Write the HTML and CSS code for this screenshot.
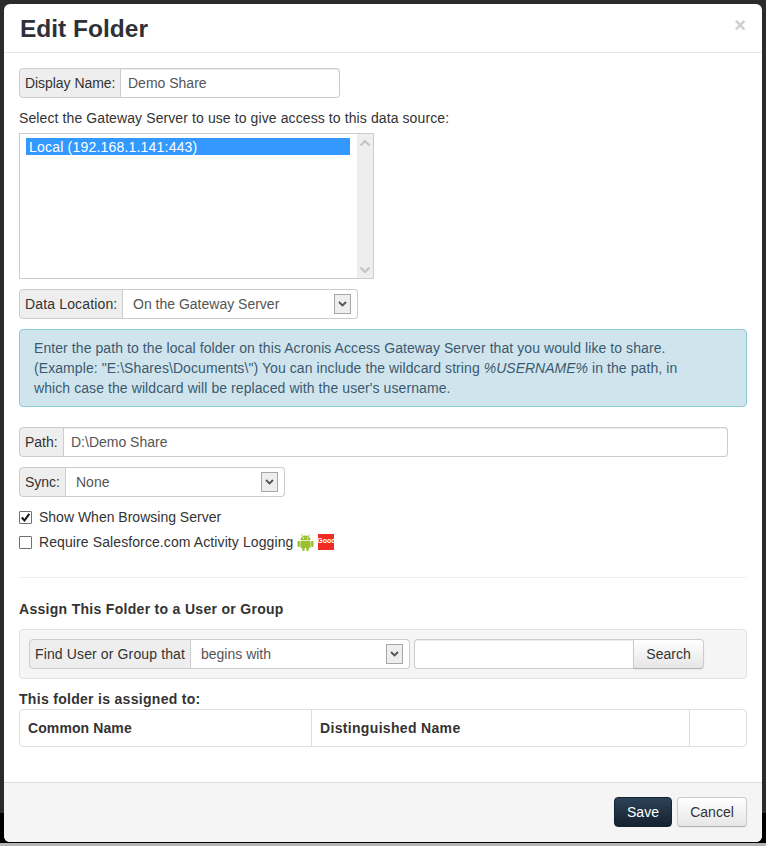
FILE: index.html
```html
<!DOCTYPE html>
<html lang="en">
<head>
<meta charset="utf-8">
<title>Edit Folder</title>
<link rel="stylesheet" href="styles.css">
</head>
<body>
<div class="backdrop">
  <div class="backdrop-strip"></div>
</div>
<div class="modal">
  <header class="modal-header">
    <h3 class="modal-title">Edit Folder</h3>
    <span class="close">×</span>
  </header>
  <div class="modal-body">
    <div class="group w-display">
      <span class="addon">Display Name:</span>
      <input class="field" type="text" value="Demo Share">
    </div>
    <p class="lead">Select the Gateway Server to use to give access to this data source:</p>
    <div class="listbox">
      <div class="list-items"><div class="option">Local (192.168.1.141:443)</div></div>
      <div class="scrollbar">
        <svg class="sb-arrow" width="12" height="8" viewBox="0 0 12 8"><path d="M1.5 6.5 6 2l4.500 4.500" fill="none" stroke="#c4c4c4" stroke-width="2.200"/></svg>
        <svg class="sb-arrow" width="12" height="8" viewBox="0 0 12 8"><path d="M1.500 1.500 6 6l4.500-4.500" fill="none" stroke="#c4c4c4" stroke-width="2.200"/></svg>
      </div>
    </div>
    <div class="group w-location">
      <span class="addon">Data Location:</span>
      <div class="select">
        <span>On the Gateway Server</span>
        <span class="select-arrow"><svg width="9" height="6" viewBox="0 0 9 6"><path d="M1 1l3.500 3.500L8 1" fill="none" stroke="#555" stroke-width="1.800"/></svg></span>
      </div>
    </div>
    <div class="alert">Enter the path to the local folder on this Acronis Access Gateway Server that you would like to share. (Example: "E:\Shares\Documents\") You can include the wildcard string <em class="wild">%USERNAME%</em> in the path, in which case the wildcard will be replaced with the user's username.</div>
    <div class="group w-path">
      <span class="addon">Path:</span>
      <input class="field field-tight" type="text" value="D:\Demo Share">
    </div>
    <div class="group w-sync">
      <span class="addon">Sync:</span>
      <div class="select">
        <span>None</span>
        <span class="select-arrow"><svg width="9" height="6" viewBox="0 0 9 6"><path d="M1 1l3.500 3.500L8 1" fill="none" stroke="#555" stroke-width="1.800"/></svg></span>
      </div>
    </div>
    <div class="check-row first">
      <span class="check"><svg width="11" height="11" viewBox="0 0 11 11"><path d="M1.800 5.500l2.700 3L9.300 1.800" fill="none" stroke="#111" stroke-width="2"/></svg></span>
      <span>Show When Browsing Server</span>
    </div>
    <div class="check-row second">
      <span class="check"></span>
      <span class="salesforce">Require Salesforce.com Activity Logging</span>
      <svg class="android" width="17" height="17" viewBox="0 0 17 17">
        <path d="M3.400 6.300a5.100 4.900 0 0 1 10.200 0z" fill="#9cc031"/>
        <path d="M5.500 2 4.600.4M11.500 2l.9-1.600" stroke="#9cc031" stroke-width=".9"/>
        <rect x="3.400" y="6.900" width="10.200" height="7.200" rx="1" fill="#9cc031"/>
        <rect x=".5" y="6.700" width="2.400" height="6.200" rx="1.200" fill="#9cc031"/>
        <rect x="14.100" y="6.700" width="2.400" height="6.200" rx="1.200" fill="#9cc031"/>
        <rect x="5.200" y="13" width="2.500" height="4" rx="1.200" fill="#9cc031"/>
        <rect x="9.300" y="13" width="2.500" height="4" rx="1.200" fill="#9cc031"/>
        <circle cx="6.400" cy="4" r=".7" fill="#fff"/>
        <circle cx="10.600" cy="4" r=".7" fill="#fff"/>
      </svg>
      <span class="good"><span class="good-text">Good</span></span>
    </div>
    <hr class="rule">
    <h4 class="section-title">Assign This Folder to a User or Group</h4>
    <div class="well">
      <div class="group w-find">
        <span class="addon">Find User or Group that</span>
        <div class="select select-find">
          <span>begins with</span>
          <span class="select-arrow"><svg width="9" height="6" viewBox="0 0 9 6"><path d="M1 1l3.500 3.500L8 1" fill="none" stroke="#555" stroke-width="1.800"/></svg></span>
        </div>
      </div>
      <div class="group w-search">
        <input class="field" type="text" value="">
        <button class="btn btn-search" type="button">Search</button>
      </div>
    </div>
    <div class="assigned-label">This folder is assigned to:</div>
    <div class="table">
      <div class="cell cell-common">Common Name</div>
      <div class="cell cell-dn">Distinguished Name</div>
      <div class="cell cell-blank"></div>
    </div>
  </div>
  <footer class="modal-footer">
    <button class="btn btn-save" type="button">Save</button>
    <button class="btn btn-cancel" type="button">Cancel</button>
  </footer>
</div>
</body>
</html>
```
FILE: styles.css
```css
* { box-sizing: border-box; }
html, body { margin: 0; height: 100%; }
body {
  width: 766px;
  height: 846px;
  overflow: hidden;
  background: #2b2b2b;
  font-family: "Liberation Sans", Arial, sans-serif;
  font-size: 14px;
  line-height: 20px;
  color: #333;
}
.backdrop { position: absolute; inset: 0; display: flex; flex-direction: column; justify-content: flex-end; }
.backdrop-strip { height: 33px; background: #000; border-bottom: 3px solid #b4b4b4; }
.modal {
  position: absolute;
  left: 4px;
  top: 4px;
  width: 758px;
  height: 838px;
  display: flex;
  flex-direction: column;
  background: #fff;
  border-radius: 6px;
}
.modal-header {
  height: 49px;
  flex: none;
  padding: 10px 16px 0 16px;
  border-bottom: 1px solid #e8e8e8;
  display: flex;
  justify-content: space-between;
}
.modal-title { margin: 0; font-size: 24.5px; line-height: 30px; font-weight: bold; color: #2e3138; }
.close { margin-top: -1px; font-size: 20px; line-height: 24px; font-weight: bold; color: #cfcfcf; }
.modal-body { flex: 1; padding: 15px 15px 0; }
.group { display: flex; height: 30px; }
.addon {
  flex: none;
  padding: 0 5px;
  line-height: 28px;
  background: #eee;
  border: 1px solid #ccc;
  border-radius: 4px 0 0 4px;
  white-space: nowrap;
}
.field {
  flex: 1;
  min-width: 0;
  height: 30px;
  padding: 0 7px;
  margin: 0;
  border: 1px solid #ccc;
  border-left: 0;
  border-radius: 0 4px 4px 0;
  background: #fff;
  box-shadow: inset 0 1px 1px rgba(0,0,0,.075);
  font: 14px "Liberation Sans", Arial, sans-serif;
  color: #555;
  outline: 0;
}
.field-tight { padding-left: 7px; }
.w-display { width: 321px; }
.w-display .addon { width: 102px; letter-spacing: -.05px; }
.lead { margin: 10px 0 5px; letter-spacing: .1px; }
.listbox {
  display: flex;
  width: 355px;
  height: 146px;
  margin-bottom: 10px;
  border: 1px solid #ccc;
  background: #fff;
}
.list-items { flex: 1; padding: 4px 6px; }
.option { height: 17px; width: 324px; padding-left: 3px; line-height: 18px; letter-spacing: .2px; background: #3399ff; color: #fff; }
.scrollbar {
  width: 16px;
  background: #eee;
  display: flex;
  flex-direction: column;
  justify-content: space-between;
  align-items: center;
  padding: 5px 0 4px;
}
.sb-arrow { display: block; }
.select {
  flex: 1;
  min-width: 0;
  height: 30px;
  display: flex;
  justify-content: space-between;
  align-items: center;
  padding: 0 6px 0 10px;
  border: 1px solid #ccc;
  border-left: 0;
  border-radius: 0 4px 4px 0;
  background: #fff;
  color: #555;
}
.select-arrow {
  width: 17px;
  height: 20px;
  display: flex;
  align-items: center;
  justify-content: center;
  background: #eee;
  border: 1px solid #a6a6a6;
}
.w-location { width: 339px; }
.w-location .addon { width: 104px; letter-spacing: .15px; }
.alert {
  width: 728px;
  height: 78px;
  margin-top: 10px;
  padding: 8px 35px 8px 14px;
  background: #d0e4ee;
  border: 1px solid #8ccbd1;
  border-radius: 4px;
  color: #3b5a6e;
  letter-spacing: .08px;
}
.wild { font-weight: normal; font-style: italic; letter-spacing: 0; }
.w-path { width: 709px; margin-top: 20px; }
.w-path .addon { width: 45px; }
.w-sync { width: 266px; margin-top: 10px; }
.w-sync .addon { width: 47px; }
.check-row { display: flex; align-items: center; height: 20px; }
.check-row.first { margin-top: 10px; }
.check-row.second { margin-top: 5px; }
.salesforce { letter-spacing: .1px; }
.check {
  flex: none;
  width: 13px;
  height: 13px;
  margin-right: 7px;
  border: 1px solid #707070;
  border-radius: 1px;
  background: #fff;
  display: flex;
  align-items: center;
  justify-content: center;
}
.android { flex: none; margin-left: 4px; }
.good {
  flex: none;
  width: 16px;
  height: 16px;
  margin-left: 4px;
  background: #ee2b24;
  overflow: hidden;
  display: flex;
  justify-content: center;
}
.good-text { font-size: 7px; line-height: 14px; font-weight: bold; color: #fff; }
.rule { height: 1px; margin: 25px 0 0; border: 0; background: #eee; }
.section-title { margin: 21px 0 0; font-size: 14px; line-height: 20px; font-weight: bold; letter-spacing: .3px; }
.well {
  height: 50px;
  margin-top: 10px;
  padding: 9px;
  display: flex;
  gap: 4px;
  background: #f5f5f5;
  border: 1px solid #e3e3e3;
  border-radius: 4px;
}
.w-find { width: 381px; }
.w-find .addon { width: 162px; letter-spacing: .13px; }
.w-search { width: 290px; }
.w-search .field { border-left: 1px solid #ccc; border-right: 0; border-radius: 4px 0 0 4px; }
.btn {
  height: 30px;
  margin: 0;
  font: 14px "Liberation Sans", Arial, sans-serif;
  border-radius: 4px;
  cursor: pointer;
}
.btn-search, .btn-cancel {
  color: #333;
  background: linear-gradient(#fff, #e6e6e6);
  border: 1px solid #ccc;
  border-bottom-color: #b3b3b3;
  box-shadow: inset 0 1px 0 rgba(255,255,255,.2), 0 1px 2px rgba(0,0,0,.05);
}
.btn-search { flex: none; width: 71px; border-radius: 0 4px 4px 0; }
.assigned-label { margin-top: 10px; font-weight: bold; letter-spacing: .3px; }
.table {
  display: flex;
  height: 38px;
  background: #fff;
  border: 1px solid #ddd;
  border-radius: 4px;
}
.cell { padding: 8px; font-weight: bold; }
.cell-common { width: 291px; letter-spacing: .1px; }
.cell-dn { width: 378px; border-left: 1px solid #ddd; letter-spacing: .33px; }
.cell-blank { flex: 1; border-left: 1px solid #ddd; }
.modal-footer {
  flex: none;
  height: 60px;
  padding: 14px 15px 0;
  display: flex;
  justify-content: flex-end;
  gap: 5px;
  background: #f5f5f5;
  border-top: 1px solid #ddd;
  border-radius: 0 0 6px 6px;
}
.btn-save {
  width: 58px;
  color: #fff;
  background: linear-gradient(#2c4258, #15222f);
  border: 1px solid #15222f;
}
.btn-cancel { width: 70px; }
```
